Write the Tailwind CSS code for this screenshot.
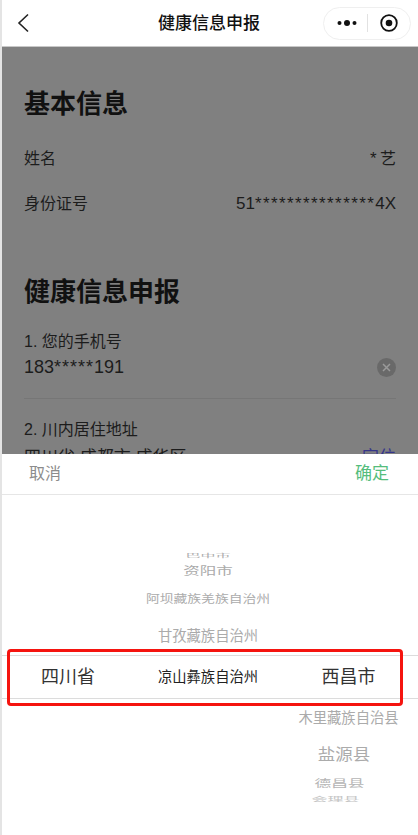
<!DOCTYPE html>
<html lang="zh-CN">
<head>
<meta charset="utf-8">
<script src="https://cdn.jsdelivr.net/npm/@tailwindcss/browser@4"></script>
<title>健康信息申报</title>
</head>
<body class="bg-white">
<div class="relative flex h-[835px] w-[418px] flex-col overflow-hidden border-l-2 border-l-[#e4e4e4] bg-white font-['Liberation_Sans','Noto_Sans_CJK_SC',sans-serif] text-[#111]">

  <header class="flex h-[47px] shrink-0 items-center border-b border-[#c8c8c8] bg-white pr-[7px] pl-[15px]">
    <svg class="h-[20px] w-[14px]" viewBox="0 0 14 20" fill="none" stroke="#222" stroke-width="1.6"><path d="M11 1.5 2 10l9 8.5"/></svg>
    <h1 class="ml-[127px] text-[17px] leading-none font-medium">健康信息申报</h1>
    <div class="ml-auto flex h-[33px] w-[88px] items-center rounded-full border border-[#efefef] bg-white">
      <svg class="ml-[12px] h-[10px] w-[22px]" viewBox="0 0 22 10" fill="#111"><circle cx="3.5" cy="5" r="2"/><circle cx="11" cy="5" r="3"/><circle cx="18.5" cy="5" r="2"/></svg>
      <span class="ml-[9px] h-[18px] w-px bg-[#e2e2e2]"></span>
      <svg class="ml-[12px] h-[18px] w-[18px]" viewBox="0 0 18 18" fill="none"><circle cx="9" cy="9" r="7.8" stroke="#111" stroke-width="1.8"/><circle cx="9" cy="9" r="3.3" fill="#111"/></svg>
    </div>
  </header>

  <main class="h-[407px] shrink-0 overflow-hidden bg-[#808080] pr-[22px] pl-[22px]">
    <section>
      <h2 class="mt-[44px] text-[26px] leading-[26px] font-bold">基本信息</h2>
      <div class="mt-[29px] flex h-[26px] items-center justify-between text-[16px]"><span class="text-[#1c1c1c]">姓名</span><span class="text-[#1c1c1c]"><span class="mr-[2px] text-[17px] tracking-[1.4px]">*</span>艺</span></div>
      <div class="mt-[19px] flex h-[26px] items-center justify-between text-[16px]"><span class="text-[#1c1c1c]">身份证号</span><span class="text-[17px] text-[#1c1c1c]">51<span class="tracking-[1.4px]">***************</span>4X</span></div>
    </section>
    <section>
      <h2 class="mt-[62px] text-[26px] leading-[26px] font-bold">健康信息申报</h2>
      <p class="mt-[25px] h-[24px] text-[16px] leading-[24px] text-[#1c1c1c]">1. 您的手机号</p>
      <div class="mt-[1px] flex h-[26px] items-center justify-between pb-[1px]">
        <span class="text-[18px] text-[#1c1c1c]">183<span class="tracking-[1px]">*****</span>191</span>
        <svg class="h-[19px] w-[19px]" viewBox="0 0 19 19"><circle cx="9.5" cy="9.5" r="9.5" fill="#696969"/><path d="m6 6 7 7m0-7-7 7" stroke="#9a9a9a" stroke-width="1.5"/></svg>
      </div>
      <div class="mt-[17px] h-px bg-[#767676]"></div>
      <p class="mt-[19px] h-[24px] text-[16px] leading-[24px] text-[#1c1c1c]">2. 川内居住地址</p>
      <div class="mt-[3px] flex h-[26px] items-center justify-between text-[17px] text-[#1c1c1c]"><span>四川省 成都市 成华区</span><span class="text-[#35358a]">定位</span></div>
    </section>
  </main>

  <section class="relative flex min-h-0 flex-1 flex-col bg-white">
    <div class="flex h-[41px] shrink-0 items-center justify-between border-b border-[#e6e6e6] pr-[27px] pl-[27px]">
      <button class="text-[16px] text-[#8c8c8c]">取消</button>
      <button class="mr-[2px] text-[17px] text-[#55bd7c]">确定</button>
    </div>

    <div class="relative flex min-h-0 flex-1 items-start">
      <div class="flex w-[129px] flex-col items-center pt-[158px] pl-[3px]">
        <div class="flex h-[48px] items-center text-[18px] text-[#333]">四川省</div>
      </div>

      <div class="flex w-[154px] flex-col items-center pt-[50px] text-[#ababab]">
        <div class="flex h-[16px] items-center overflow-hidden"><span class="origin-bottom translate-y-[-3px] scale-y-[0.3] text-[15px] leading-none">巴中市</span></div>
        <div class="flex h-[20px] items-center"><span class="scale-y-[0.7] text-[16.5px] leading-none">资阳市</span></div>
        <div class="flex h-[38px] items-center"><span class="scale-y-[0.85] text-[13.8px] leading-none">阿坝藏族羌族自治州</span></div>
        <div class="flex h-[34px] items-center"><span class="text-[14.3px] leading-none">甘孜藏族自治州</span></div>
        <div class="flex h-[48px] items-center text-[14.3px] leading-none text-[#222]">凉山彝族自治州</div>
      </div>

      <div class="flex w-[131px] flex-col items-center pt-[158px] pr-[4px]">
        <div class="flex h-[48px] items-center text-[18px] text-[#333]">西昌市</div>
        <div class="flex h-[34px] items-center whitespace-nowrap text-[14.3px] leading-none text-[#ababab]">木里藏族自治县</div>
        <div class="mr-[9px] flex h-[42px] items-center"><span class="scale-y-[0.9] text-[17.5px] leading-none text-[#ababab]">盐源县</span></div>
        <div class="mr-[18px] flex h-[15px] items-center"><span class="scale-y-[0.6] text-[16.7px] leading-none text-[#b5b5b5]">德昌县</span></div>
        <div class="mr-[26px] flex h-[14px] items-center"><span class="scale-y-[0.35] text-[16px] leading-none text-[#c4c4c4]">会理县</span></div>
      </div>

      <div class="absolute top-[160px] right-0 left-0 h-[44px] border-y border-[#dcdcdc]"></div>
    </div>

    <div class="absolute top-[195px] left-[5px] h-[57px] w-[396px] rounded-[4px] border-[3px] border-[#f5140f]"></div>
  </section>
</div>
</body>
</html>
